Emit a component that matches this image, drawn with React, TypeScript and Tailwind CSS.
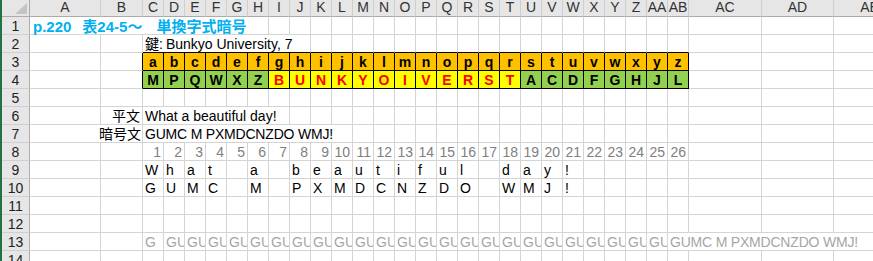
import React from "react";

const LETTERS = "ABCDEFGHIJKLMNOPQRSTUVWXYZ".split("");
const COLS = [...LETTERS, "AA", "AB", "AC", "AD", "AE"];
const PLAIN = "What a beautiful day!";
const CIPHER = "GUMC M PXMDCNZDO WMJ!";
const KEY_ROW = "MPQWXZBUNKYOIVERSTACDFGHJL".split("");

const GRID = "border-[#d4d4d4]";
const SPAN: Record<number, string> = {
  1: "",
  2: "col-span-2",
  4: "col-span-4",
  7: "col-span-7",
  8: "col-span-8",
  10: "col-span-10",
};

type Cell = { c: number; span?: number; text?: React.ReactNode; cls?: string };

// borders around the a–z / key table (C3:AB4)
function edge(r: number, c: number, span = 1) {
  const last = c + span - 1;
  if ((r === 3 || r === 4) && c >= 2 && last <= 27) return "border-r border-b border-black";
  if ((r === 3 || r === 4) && c === 1) return "border-r border-b border-r-black border-b-[#d4d4d4]";
  if (r === 2 && c >= 2 && last <= 27) return "border-r border-b border-r-[#d4d4d4] border-b-black";
  return `border-r border-b ${GRID}`;
}

function Row({ n, cells = [] }: { n: number; cells?: Cell[] }) {
  const out: React.ReactNode[] = [
    <div
      key="h"
      className="bg-[#e6e6e6] border-r border-b border-r-[#ababab] border-b-[#d0d0d0] text-[#222] text-center pt-[2px] leading-[15px]"
    >
      {n}
    </div>,
  ];
  let c = 0;
  while (c < COLS.length) {
    const cell = cells.find((x) => x.c === c);
    const span = cell?.span ?? 1;
    out.push(
      <div
        key={c}
        className={`${SPAN[span]} ${edge(n, c, span)} whitespace-nowrap pt-[2px] leading-[15px] ${cell?.cls ?? ""}`}
      >
        {cell?.text}
      </div>
    );
    c += span;
  }
  return <>{out}</>;
}

function HeaderRow() {
  return (
    <>
      <div className="relative bg-[#e6e6e6] border-r border-b border-r-[#ababab] border-b-[#ababab]">
        <svg className="absolute right-[2px] bottom-[2px]" width="12" height="11" viewBox="0 0 12 11">
          <polygon points="0,11 12,11 12,0" fill="#c4c4c4" />
        </svg>
      </div>
      {COLS.map((name) => (
        <div
          key={name}
          className="bg-[#e6e6e6] border-r border-b border-r-[#cfcfcf] border-b-[#ababab] text-[#333] text-center leading-[15px] overflow-hidden whitespace-nowrap"
        >
          {name}
        </div>
      ))}
    </>
  );
}

const L = "pl-[2px]";
const CENTER = "text-center font-bold";

export default function App() {
  const rows: Record<number, Cell[]> = {
    1: [
      {
        c: 0,
        span: 8,
        text: (
          <>
            p.220<span className="ml-[11px]">表24-5～</span>
            <span className="ml-[14px]">単換字式暗号</span>
          </>
        ),
        cls: "pl-[3px] font-bold text-[15px] text-[#00b0f0]",
      },
    ],
    2: [
      {
        c: 2,
        span: 8,
        text: (
          <>
            鍵:<span className="ml-[3px]">Bunkyo University, 7</span>
          </>
        ),
        cls: L,
      },
    ],
    3: "abcdefghijklmnopqrstuvwxyz".split("").map((ch, i) => ({
      c: i + 2,
      text: ch,
      cls: `${CENTER} bg-[#ffc000]`,
    })),
    4: KEY_ROW.map((ch, i) => ({
      c: i + 2,
      text: ch,
      cls: `${CENTER} ${i >= 6 && i <= 17 ? "bg-[#ffff00] text-[#ff0000]" : "bg-[#92d050]"}`,
    })),
    6: [
      { c: 1, text: "平文", cls: "text-right pr-[2px]" },
      { c: 2, span: 7, text: PLAIN, cls: L },
    ],
    7: [
      { c: 0, span: 2, text: "暗号文", cls: "text-right pr-[1px]" },
      { c: 2, span: 10, text: CIPHER, cls: `${L} tracking-[-0.2px]` },
    ],
    8: Array.from({ length: 26 }, (_, i) => ({
      c: i + 2,
      text: i + 1,
      cls: "text-right pr-[2px] text-[#808080]",
    })),
    9: PLAIN.split("").map((ch, i) => ({ c: i + 2, text: ch, cls: L })),
    10: CIPHER.split("").map((ch, i) => ({ c: i + 2, text: ch, cls: L })),
    13: [
      ...Array.from({ length: 25 }, (_, i) => ({
        c: i + 2,
        text: CIPHER.slice(0, i + 1),
        cls: `${L} overflow-hidden text-[#a6a6a6]`,
      })),
      { c: 27, span: 4, text: CIPHER, cls: `${L} tracking-[-0.2px] text-[#a6a6a6]` },
    ],
  };

  return (
    <div className="w-[873px] h-[261px] overflow-hidden bg-white border-l-2 border-[#217346] font-['Liberation_Sans','Noto_Sans_CJK_JP',sans-serif] text-[14px] text-black">
      <div className="grid w-max grid-cols-[28px_71px_42px_repeat(26,21px)_73px_72px_72px] grid-rows-[17px_repeat(14,18px)]">
        <HeaderRow />
        {Array.from({ length: 14 }, (_, i) => (
          <Row key={i} n={i + 1} cells={rows[i + 1]} />
        ))}
      </div>
    </div>
  );
}
